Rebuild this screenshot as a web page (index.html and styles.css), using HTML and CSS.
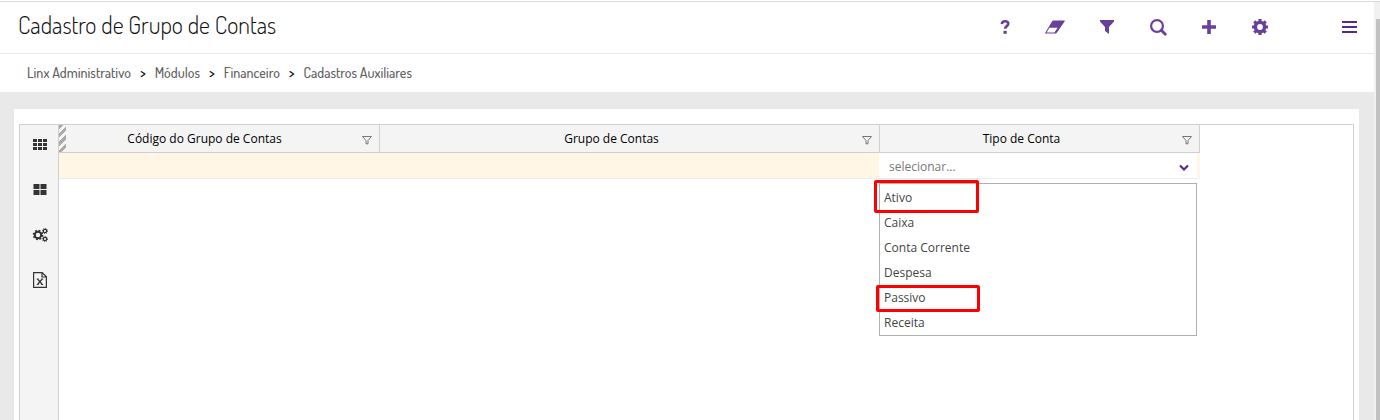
FILE: index.html
```html
<!DOCTYPE html>
<html lang="pt-BR">
  <head>
    <meta charset="UTF-8" />
    <meta name="viewport" content="width=device-width, initial-scale=1.0" />
    <title>Cadastro de Grupo de Contas</title>
    <link rel="stylesheet" href="styles.css">
  </head>
  <body>
    <div class="page">
      <header class="topbar">
        <h1>Cadastro de Grupo de Contas</h1>
        <div class="toolbar">
          <button type="button" aria-label="Ajuda">
            <svg width="18" height="18" viewBox="0 0 18 18"><path d="M5.8 6.200C6 4 7.300 3.300 9.100 3.300c2 0 3.200 1 3.200 2.500 0 2.400-3.200 2.300-3.200 5" fill="none" stroke="currentColor" stroke-width="2.600"/><path d="M7.500 12.800h3.200v3H7.500z" fill="currentColor"/></svg>
          </button>
          <button type="button" aria-label="Limpar">
            <svg width="22" height="18" viewBox="0 0 22 18"><path d="M8.500 2.500h10.700q1 0 .4.900L12 14.600q-.6.900-1.600.9H.8q-1.200 0-.4-1L7 3.400q.6-.9 1.500-.9z" fill="currentColor"/><path d="M4.400 9.800h8.200L9.400 14.400H1.600z" fill="#fff"/></svg>
          </button>
          <button type="button" aria-label="Filtrar">
            <svg width="18" height="18" viewBox="0 0 18 18"><path d="M2 2h14v1.500l-5 5.500v7l-4-3V9L2 3.500z" fill="currentColor"/></svg>
          </button>
          <button type="button" aria-label="Pesquisar">
            <svg width="18" height="18" viewBox="0 0 18 18" fill="none" stroke="currentColor"><circle cx="8" cy="8" r="5.900" stroke-width="2.200"/><path d="M12.300 12.300l4 4" stroke-width="2.800" stroke-linecap="round"/></svg>
          </button>
          <button type="button" aria-label="Incluir">
            <svg width="18" height="18" viewBox="0 0 18 18"><path d="M7.200 2h3.600v5.200H16v3.600h-5.200V16H7.200v-5.200H2V7.200h5.200z" fill="currentColor"/></svg>
          </button>
          <button type="button" aria-label="Configurar">
            <svg width="18" height="18" viewBox="0 0 18 18" fill="none" stroke="currentColor"><circle cx="9" cy="9" r="4.600" stroke-width="3.400"/><path d="M9 1v3M9 14v3M1 9h3M14 9h3M3.300 3.300l2 2M12.700 12.700l2 2M14.700 3.300l-2 2M5.300 12.700l-2 2" stroke-width="3.200"/></svg>
          </button>
          <button type="button" class="menu-btn" aria-label="Menu">
            <svg width="16" height="14" viewBox="0 0 16 14"><path d="M1 1h15v2H1zM1 6h15v2H1zM1 11h15v2H1z" fill="currentColor"/></svg>
          </button>
        </div>
      </header>

      <nav class="breadcrumb" aria-label="Caminho">
        <a href="#">Linx Administrativo</a>
        <span>&gt;</span>
        <a href="#">Módulos</a>
        <span>&gt;</span>
        <a href="#">Financeiro</a>
        <span>&gt;</span>
        <a href="#">Cadastros Auxiliares</a>
      </nav>

      <main>
        <div class="card">
          <div class="grid-box">
            <div class="side-tools">
              <button type="button" aria-label="Grade">
                <svg width="14" height="12" viewBox="0 0 14 12"><path d="M0 0h4v3H0zM5 0h4v3H5zM10 0h4v3h-4zM0 4h4v3H0zM5 4h4v3H5zM10 4h4v3h-4zM0 8h4v3H0zM5 8h4v3H5zM10 8h4v3h-4z" fill="currentColor"/></svg>
              </button>
              <button type="button" aria-label="Blocos">
                <svg width="14" height="12" viewBox="0 0 14 12"><path d="M.5 0h6v5h-6zM7.500 0h6v5h-6zM.5 6h6v5h-6zM7.500 6h6v5h-6z" fill="currentColor"/></svg>
              </button>
              <button type="button" aria-label="Opções">
                <svg width="16" height="16" viewBox="0 0 16 16" fill="none" stroke="currentColor"><circle cx="6" cy="8" r="3.200" stroke-width="2"/><circle cx="6" cy="8" r="4.600" stroke-width="1.400" stroke-dasharray="1.900 1.710"/><circle cx="13" cy="4" r="1.700" stroke-width="1.200"/><circle cx="13" cy="4" r="2.600" stroke-width="1" stroke-dasharray="1 1.040"/><circle cx="13" cy="12" r="1.700" stroke-width="1.200"/><circle cx="13" cy="12" r="2.600" stroke-width="1" stroke-dasharray="1 1.040"/></svg>
              </button>
              <button type="button" aria-label="Exportar para Excel">
                <svg width="14" height="16" viewBox="0 0 14 16" fill="none" stroke="currentColor" stroke-width="1.200"><path d="M.6.6h8.600l4.200 4.200v10.600H.6zM9 .6V5h4.400M4.600 7l4.600 5.500M9.200 7l-4.600 5.500M3.700 7h2M8.200 7h2M3.700 12.500h2M8.200 12.500h2"/></svg>
              </button>
            </div>

            <div class="grid-content">
              <table>
                <colgroup>
                  <col class="col-codigo">
                  <col class="col-grupo">
                  <col class="col-tipo">
                </colgroup>
                <thead>
                  <tr>
                    <th scope="col">
                      <div class="head-cell with-handle">
                        <span>Código do Grupo de Contas</span>
                        <button type="button" aria-label="Filtrar código"><svg width="10" height="10" viewBox="0 0 10 10"><path d="M.5 1.500h9L6 5.500v3.300H4V5.500z" fill="none" stroke="currentColor"/></svg></button>
                      </div>
                    </th>
                    <th scope="col">
                      <div class="head-cell">
                        <span>Grupo de Contas</span>
                        <button type="button" aria-label="Filtrar grupo"><svg width="10" height="10" viewBox="0 0 10 10"><path d="M.5 1.500h9L6 5.500v3.300H4V5.500z" fill="none" stroke="currentColor"/></svg></button>
                      </div>
                    </th>
                    <th scope="col">
                      <div class="head-cell">
                        <span>Tipo de Conta</span>
                        <button type="button" aria-label="Filtrar tipo"><svg width="10" height="10" viewBox="0 0 10 10"><path d="M.5 1.500h9L6 5.500v3.300H4V5.500z" fill="none" stroke="currentColor"/></svg></button>
                      </div>
                    </th>
                  </tr>
                </thead>
                <tbody>
                  <tr>
                    <td></td>
                    <td></td>
                    <td>
                      <div class="tipo-cell">
                        <select aria-label="Tipo de Conta">
                          <option>selecionar...</option>
                        </select>
                        <svg class="chevron" width="10" height="8" viewBox="0 0 10 8"><path d="M1 1.500l4 4 4-4" fill="none" stroke="currentColor" stroke-width="2.200"/></svg>
                        <ul class="options" role="listbox" aria-label="Tipo de Conta">
                          <li role="option" class="marked">Ativo</li>
                          <li role="option">Caixa</li>
                          <li role="option">Conta Corrente</li>
                          <li role="option">Despesa</li>
                          <li role="option" class="marked marked-small">Passivo</li>
                          <li role="option">Receita</li>
                        </ul>
                      </div>
                    </td>
                  </tr>
                </tbody>
              </table>
            </div>
          </div>
        </div>
      </main>
    </div>
    <div class="scrollbar"><div class="thumb"></div></div>
  </body>
</html>
```
FILE: styles.css
```css
*,
*::before,
*::after {
  margin: 0;
  padding: 0;
  box-sizing: border-box;
}
body {
  display: flex;
  min-height: 100vh;
  padding-top: 1px;
  background: #fff;
  font-family: "Open Sans", sans-serif;
  font-size: 12px;
  color: #000;
}
button {
  border: none;
  background: transparent;
  cursor: pointer;
  display: flex;
  align-items: center;
  justify-content: center;
}
.page {
  flex: 1;
  min-width: 0;
  display: flex;
  flex-direction: column;
  border-top: 1px solid #d9dada;
}

/* header */
.topbar {
  display: flex;
  align-items: center;
  justify-content: space-between;
  height: 52px;
  padding-left: 18px;
  border-bottom: 1px solid #e9e9e9;
}
h1 {
  font-family: "Dosis", "Liberation Sans Narrow", "Lato", sans-serif;
  font-size: 24px;
  font-weight: 300;
  line-height: 32px;
  padding-bottom: 6px;
  color: #111;
}
.toolbar {
  display: flex;
  color: #68409c;
}
.toolbar button {
  width: 51px;
  height: 50px;
  padding-bottom: 2px;
  color: inherit;
}
.toolbar .menu-btn {
  margin-left: 38px;
  color: #552a90;
}
.breadcrumb {
  display: flex;
  align-items: center;
  gap: 9px;
  height: 38px;
  padding: 0 0 2px 27px;
  font-family: "Dosis", "Liberation Sans Narrow", "Lato", sans-serif;
  font-size: 14px;
  font-weight: 500;
}
.breadcrumb a {
  color: #606060;
  text-decoration: none;
}
.breadcrumb a:hover {
  text-decoration: underline;
}

/* content */
main {
  flex: 1;
  display: flex;
  padding: 17px 15px 0 14px;
  background: #e9e9e9;
}
.card {
  flex: 1;
  display: flex;
  padding: 15px 5px 0;
  background: #fff;
}
.grid-box {
  flex: 1;
  display: flex;
  border: 1px solid #d0d0d0;
  border-bottom: none;
}
.side-tools {
  width: 39px;
  padding-top: 7px;
  display: flex;
  flex-direction: column;
  gap: 20px;
  background: #f4f4f4;
  border-right: 1px solid #d0d0d0;
}
.side-tools button {
  width: 100%;
  height: 25px;
  padding-left: 2px;
  color: #333;
}
.grid-content {
  flex: 1;
}
table {
  table-layout: fixed;
  border-collapse: separate;
  border-spacing: 0;
  width: 0;
}
.col-codigo {
  width: 321px;
}
.col-grupo {
  width: 500px;
}
.col-tipo {
  width: 320px;
}
th {
  height: 28px;
  background: #f4f4f4;
  border-right: 1px solid #d0d0d0;
  border-bottom: 1px solid #d0d0d0;
  font-weight: 400;
}
.head-cell {
  display: flex;
  align-items: center;
  height: 27px;
  padding-right: 6px;
}
.head-cell span {
  flex: 1;
  padding-right: 18px;
}
.head-cell button {
  width: 12px;
  height: 20px;
  padding-top: 3px;
  color: #777;
}
.with-handle::before {
  content: "";
  width: 7px;
  height: 27px;
  background: repeating-linear-gradient(135deg, #aaa 0 3px, #f4f4f4 3px 6px);
}
td {
  height: 26px;
  background: #fff6e5;
  border-bottom: 1px solid #ececec;
}
.tipo-cell {
  position: relative;
  margin: 0 3px 0 -1px;
}
select {
  display: block;
  width: 100%;
  height: 25px;
  padding: 2px 30px 0 10px;
  border: none;
  outline: none;
  appearance: none;
  background: #fff;
  font-family: inherit;
  font-size: 12px;
  color: #777;
}
.chevron {
  position: absolute;
  top: 11px;
  right: 8px;
  color: #552a90;
  pointer-events: none;
}
.options {
  position: absolute;
  top: 30px;
  left: 0;
  width: 100%;
  background: #fff;
  border: 1px solid #b0b0b0;
  padding-top: 1px;
  list-style: none;
  color: #444;
}
.options li {
  position: relative;
  height: 25px;
  line-height: 25px;
  padding-left: 4px;
}
.marked::after {
  content: "";
  position: absolute;
  top: -5px;
  left: -6px;
  width: 105px;
  height: 33px;
  border: 3px solid #f00;
  border-radius: 2px;
}
.marked-small::after {
  top: 0;
  left: -4px;
  width: 104px;
  height: 27px;
}

/* window scrollbar */
.scrollbar {
  width: 6px;
  padding: 17px 0 0 2px;
  display: flex;
  background: #f1f1f1;
  border-top: 1px solid #d9dada;
}
.thumb {
  flex: 1;
  background: #c1c1c1;
}
```
